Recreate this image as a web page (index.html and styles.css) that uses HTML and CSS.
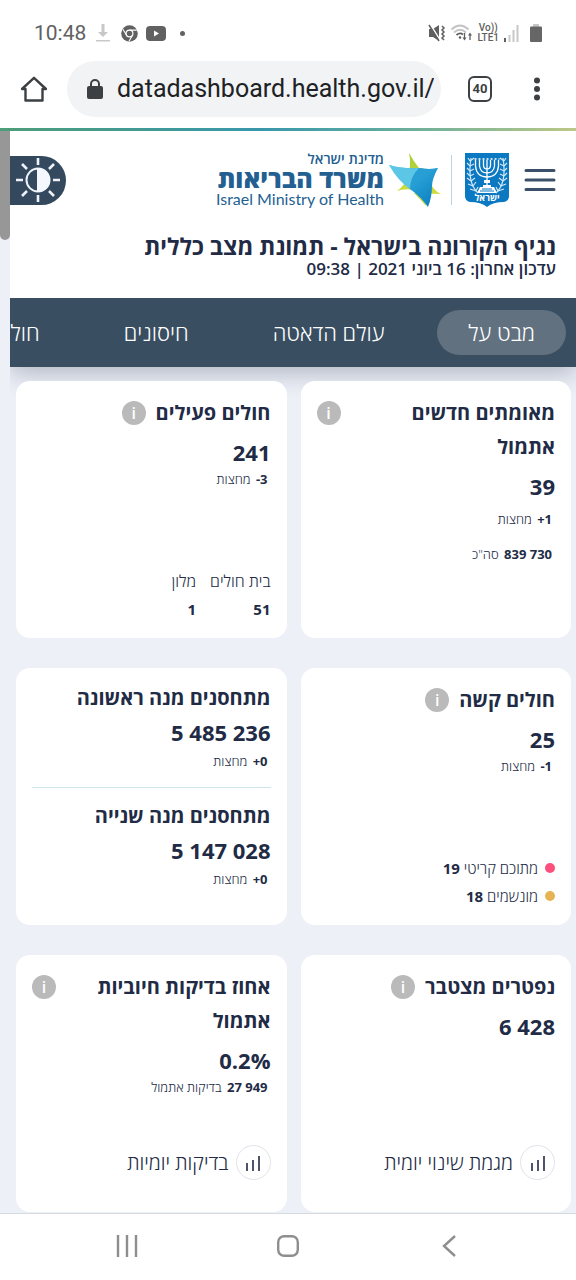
FILE: index.html
```html
<!DOCTYPE html>
<html lang="he">
<head>
<meta charset="utf-8">
<meta name="viewport" content="width=device-width, initial-scale=1">
<title>נגיף הקורונה בישראל - תמונת מצב כללית</title>
<link rel="stylesheet" href="styles.css">
</head>
<body>
<div class="phone">
  <div class="status">
    <div class="status-group">
      <span class="clock">10:48</span>
      <svg class="ico-download" width="14" height="18" viewBox="0 0 14 18" fill="#c8c8c8"><path d="M5.500 0h3v8H12l-5 5-5-5h3.500zM0 16h14v1.500H0z"/></svg>
      <svg class="ico-chrome" width="17" height="17" viewBox="0 0 17 17"><circle cx="8.500" cy="8.500" r="8.300" fill="#616161"/><circle cx="8.500" cy="8.500" r="3.400" fill="#616161" stroke="#fff" stroke-width="1.200"/><path d="M8.500 5.100h7.300M5.600 10.300 1.900 4.200M11.400 10.300 7.900 16.600" stroke="#fff" stroke-width="1.100"/></svg>
      <svg width="20" height="15" viewBox="0 0 20 15"><rect width="20" height="15" rx="4" fill="#616161"/><path d="M8 4.500v6l5-3z" fill="#fff"/></svg>
      <span class="more-dot"></span>
    </div>
    <div class="status-group status-right">
      <svg width="18" height="18" viewBox="0 0 18 18" fill="#5f5f5f"><path d="M1 5h4l6-4v16l-6-4H1z"/><path d="M2 0 12 16" stroke="#fff" stroke-width="1.500"/><path d="M1 1 11 17M14 2l2 2-2 2 2 2-2 2 2 2-2 2 2 2" fill="none" stroke="#5f5f5f" stroke-width="1.500"/></svg>
      <svg width="21" height="18" viewBox="0 0 21 18" fill="none" stroke-width="1.800"><path d="M0.500 5.500Q9 -2.500 17.500 5.500M3 8.500Q9 3 15 8.500" stroke="#c3c3c3"/><path d="M5.500 11Q9 8 12 10.500" stroke="#5f5f5f"/><circle cx="9" cy="13.500" r="1.300" fill="#5f5f5f"/><path d="M13.500 9v6M19 16v-6" stroke="#5f5f5f" stroke-width="1.300"/><path d="M11.500 13.500h4l-2 3zM17 11.500h4l-2-3z" fill="#5f5f5f"/></svg>
      <span class="lte"><span>Vo))</span><span>LTE1</span></span>
      <svg width="15" height="17" viewBox="0 0 15 17"><path d="M0 13h2v4H0z" fill="#5f5f5f"/><path d="M4.500 10h2v7h-2zM8.500 5h2v12h-2zM12.500 0h2v17h-2z" fill="#c8c8c8"/></svg>
      <svg class="battery" width="12" height="18" viewBox="0 0 12 18"><path d="M3 0h6v3H3z" fill="#c8c8c8"/><rect y="2.500" width="12" height="15.500" rx="1" fill="#666"/></svg>
    </div>
  </div>

  <div class="browser">
    <button class="plain" aria-label="Home"><svg width="26" height="26" viewBox="0 0 26 26" fill="none" stroke="#3c4043" stroke-width="2.400" stroke-linejoin="round"><path d="M1 13 13 1.800 25 13h-3.500v11.500h-17V13z"/></svg></button>
    <label class="address">
      <svg width="16" height="20" viewBox="0 0 16 20"><rect y="7" width="16" height="13" rx="2" fill="#3c4043"/><path d="M4 8V5a4 4 0 0 1 8 0v3" fill="none" stroke="#3c4043" stroke-width="2"/></svg>
      <input type="text" value="datadashboard.health.gov.il/" aria-label="Address">
    </label>
    <button class="tab-count" aria-label="Open tabs">40</button>
    <button class="plain" aria-label="Menu"><svg width="8" height="24" viewBox="0 0 8 24" fill="#3c4043"><circle cx="4" cy="3.500" r="3"/><circle cx="4" cy="12" r="3"/><circle cx="4" cy="20.500" r="3"/></svg></button>
  </div>
  <div class="rainbow"></div>

  <div class="site">
    <div class="scrollbar"><div class="thumb"></div></div>
    <div class="page" dir="rtl">
      <header class="header">
        <div class="brand-row">
          <button class="plain" aria-label="תפריט"><svg width="32" height="24" viewBox="0 0 32 24" stroke="#3a5068" stroke-width="3" stroke-linecap="round"><path d="M2 2.500h28M2 12h28M2 21.500h28"/></svg></button>
          <svg class="emblem" width="44" height="54" viewBox="0 0 44 54">
            <path d="M0 0h44v43q0 5-5 6-11 0-17 5-6-5-17-5-5-1-5-6z" fill="#0b78c2"/>
            <g fill="none" stroke="#fff" stroke-width="1.300"><path d="M22 7v25M18.500 7v5q0 4 3.500 4t3.500-4V7M14.500 7v6q1 7 7.500 7t7.500-7V7M10.500 7v6q1 11 11.500 11t11.500-11V7"/><path d="M9.500 6h25" stroke-dasharray="2 2"/></g>
            <path d="M19 27h6v3h-6zM18 32h8v2h-8zM15 34h14l3 6H12z" fill="#fff"/><path d="M17 36h10M15 38h14" stroke="#0b78c2"/>
            <g fill="none" stroke="#cfe6f5" stroke-width="1.200"><path d="M13 40Q2 30 6 5M31 40Q42 30 38 5"/><path d="M5 8 3 5M5 8l4-3M5 13l-3-3M5 13l4-2M5 18l-3-3M5 18l4-2M5 23l-3-3M5 23l4-2M6 28l-4-3M6 28l4-3M8 33l-5-2M8 33l3-4M11 38l-6-2M11 38l2-4M39 8l2-3M39 8l-4-3M39 13l3-3M39 13l-4-2M39 18l3-3M39 18l-4-2M39 23l3-3M39 23l-4-2M38 28l4-3M38 28l-4-3M36 33l5-2M36 33l-3-4M33 38l6-2M33 38l-2-4"/></g>
            <text x="22" y="48" class="emblem-text">ישראל</text>
          </svg>
          <span class="brand-rule"></span>
          <svg class="star" width="52" height="55" viewBox="0 0 52 55">
            <defs>
              <linearGradient id="blue" x1="0" y1="0" x2="1" y2="1"><stop offset="0" stop-color="#42c2e8"/><stop offset="1" stop-color="#0879bf"/></linearGradient>
              <linearGradient id="lime" x1="0" y1="0" x2="0" y2="1"><stop offset="0" stop-color="#a3ce39"/><stop offset="1" stop-color="#d2dd3c"/></linearGradient>
            </defs>
            <path d="M20 0Q25 9 30 15l13 2v16q3 5 9 8-10 0-17-1l-10-3q-9-2-17 1 8-6 10-13 5-12 2-25z" fill="url(#lime)"/>
            <path d="M40 38q-5 7-3 15-5-6-12-13z" fill="#c9da3d"/>
            <path d="M0 12q14 4 30 3 11 2 19 0-6 11-6 18 0 11-4 21-7-10-18-18Q12 28 0 12z" fill="url(#blue)"/>
            <path d="M0 12q14 4 30 3-7 9-9 21Q9 28 0 12z" fill="#5cc6e6"/>
            <path d="m49 15-20 14-8 7q0-12 9-21 11 2 19 0z" fill="#279fd4"/>
          </svg>
          <div class="brand-text">
            <span class="brand-state">מדינת ישראל</span>
            <span class="brand-name">משרד הבריאות</span>
            <span class="brand-en" dir="ltr">Israel Ministry of Health</span>
          </div>
          <button class="contrast" aria-label="מצב תצוגה"><svg width="44" height="44" viewBox="0 0 44 44"><circle cx="22" cy="22" r="11.500" fill="none" stroke="#eef3fb" stroke-width="2"/><path d="M21 10h1a12 12 0 0 1 0 24h-1z" fill="#f4f7fd"/><path d="M22 0v7M22 37v7M0 22h7M37 22h7M6 6l5 5M33 33l5 5M38 6l-5 5M11 33l-5 5" stroke="#eef3fb" stroke-width="2.600"/></svg></button>
        </div>
        <h1 class="title">נגיף הקורונה בישראל - תמונת מצב כללית</h1>
        <p class="updated">עדכון אחרון: 16 ביוני 2021 | 09:38</p>
      </header>

      <nav class="tabs">
        <a href="#" class="tab active">מבט על</a>
        <a href="#" class="tab">עולם הדאטה</a>
        <a href="#" class="tab">חיסונים</a>
        <a href="#" class="tab">חול</a>
      </nav>

      <main class="cards">
        <section class="card">
          <div class="head spread"><h2>מאומתים חדשים אתמול</h2><button class="info" aria-label="מידע">i</button></div>
          <p class="figure">39</p>
          <p class="delta tall"><b dir="ltr">+1</b> מחצות</p>
          <p class="delta tall"><b dir="ltr">839 730</b> סה"כ</p>
        </section>

        <section class="card">
          <div class="head"><h2>חולים פעילים</h2><button class="info" aria-label="מידע">i</button></div>
          <p class="figure">241</p>
          <p class="delta"><b dir="ltr">-3</b> מחצות</p>
          <dl class="places foot">
            <div><dt>בית חולים</dt><dd>51</dd></div>
            <div><dt>מלון</dt><dd>1</dd></div>
          </dl>
        </section>

        <section class="card">
          <div class="head"><h2>חולים קשה</h2><button class="info" aria-label="מידע">i</button></div>
          <p class="figure">25</p>
          <p class="delta"><b dir="ltr">-1</b> מחצות</p>
          <ul class="legend foot">
            <li><span class="dot critical"></span><span>מתוכם קריטי <b>19</b></span></li>
            <li><span class="dot ventilated"></span><span>מונשמים <b>18</b></span></li>
          </ul>
        </section>

        <section class="card doses">
          <div class="dose">
            <h2>מתחסנים מנה ראשונה</h2>
            <p class="figure"><bdi dir="ltr">5 485 236</bdi></p>
            <p class="delta"><b dir="ltr">+0</b> מחצות</p>
          </div>
          <div class="dose">
            <h2>מתחסנים מנה שנייה</h2>
            <p class="figure"><bdi dir="ltr">5 147 028</bdi></p>
            <p class="delta"><b dir="ltr">+0</b> מחצות</p>
          </div>
        </section>

        <section class="card">
          <div class="head"><h2>נפטרים מצטבר</h2><button class="info" aria-label="מידע">i</button></div>
          <p class="figure"><bdi dir="ltr">6 428</bdi></p>
          <a href="#" class="trend foot"><span class="ring"><svg width="16" height="16" viewBox="0 0 16 16" stroke="#222b45" stroke-width="1.600"><path d="M2 8v8M8 5v11M14 1v15"/></svg></span>מגמת שינוי יומית</a>
        </section>

        <section class="card">
          <div class="head spread"><h2>אחוז בדיקות חיוביות אתמול</h2><button class="info" aria-label="מידע">i</button></div>
          <p class="figure"><bdi dir="ltr">0.2%</bdi></p>
          <p class="delta"><b dir="ltr">27 949</b> בדיקות אתמול</p>
          <a href="#" class="trend foot"><span class="ring"><svg width="16" height="16" viewBox="0 0 16 16" stroke="#222b45" stroke-width="1.600"><path d="M2 8v8M8 5v11M14 1v15"/></svg></span>בדיקות יומיות</a>
        </section>
      </main>
    </div>
  </div>

  <div class="system-nav">
    <button class="plain" aria-label="Recents"><svg width="22" height="22" viewBox="0 0 22 22" stroke="#8e8e8e" stroke-width="2.400"><path d="M2 0v22M11 0v22M20 0v22"/></svg></button>
    <button class="plain" aria-label="Home screen"><svg width="22" height="22" viewBox="0 0 22 22" fill="none" stroke="#8e8e8e" stroke-width="2.400"><rect x="1.200" y="1.200" width="19.600" height="19.600" rx="6"/></svg></button>
    <button class="plain" aria-label="Back"><svg width="22" height="22" viewBox="0 0 22 22" fill="none" stroke="#8e8e8e" stroke-width="2.400"><path d="M17 1 6 11l11 10"/></svg></button>
  </div>
</div>
</body>
</html>
```

FILE: styles.css
```css
* { box-sizing: border-box; }

body {
  margin: 0;
  background: #fff;
  color: #222b45;
  font-family: "Open Sans", "Noto Sans", sans-serif;
}

h1, h2, p, dl, dd, ul { margin: 0; padding: 0; }
ul { list-style: none; }
svg { display: block; flex: none; }
button { font-family: inherit; cursor: pointer; }
a { color: inherit; text-decoration: none; }
.plain { background: none; border: 0; padding: 0; }

.phone {
  min-height: 100vh;
  display: flex;
  flex-direction: column;
}

/* Status bar */
.status {
  display: flex;
  justify-content: space-between;
  align-items: flex-end;
  height: 48px;
  padding: 0 34px;
  font-family: Roboto, sans-serif;
  color: #616161;
}
.status-group { display: flex; align-items: center; height: 30px; }
.clock { font-size: 21px; line-height: 30px; margin-right: 10px; }
.ico-download { margin-right: 11px; }
.ico-chrome { margin-right: 8px; }
.more-dot { width: 5px; height: 5px; border-radius: 50%; background: #616161; margin-left: 14px; }
.status-right { gap: 5px; }
.lte { display: flex; flex-direction: column; align-items: center; font-size: 10px; line-height: 10px; font-weight: 500; }
.battery { margin-left: 6px; }

/* Browser bar */
.browser {
  display: flex;
  align-items: center;
  height: 80px;
  padding: 2px 35px 0 21px;
}
.address {
  flex: 1;
  display: flex;
  align-items: center;
  gap: 14px;
  height: 56px;
  margin: 0 27px 0 20px;
  padding: 0 7px 0 20px;
  border-radius: 28px;
  background: #f1f3f4;
}
.address input {
  flex: 1;
  min-width: 0;
  border: 0;
  padding: 0;
  background: none;
  font: 25px/32px Roboto, sans-serif;
  color: #202124;
}
.tab-count {
  width: 26px;
  height: 26px;
  margin-right: 41px;
  padding: 0;
  border: 2px solid #3c4043;
  border-radius: 6px;
  background: none;
  color: #3c4043;
  font: bold 13px/20px Roboto, sans-serif;
}
.rainbow { height: 3px; background: linear-gradient(90deg, #4d9e78, #3897ac 45%, #5aa9a0 65%, #bcc886); }

/* Site */
.site { flex: 1; display: flex; background: #edf0f7; }
.scrollbar { width: 10px; flex: none; }
.thumb { height: 109px; background: #979797; border-radius: 0 0 5px 5px; }
.page { flex: 1; min-width: 0; }

.header { background: #fff; padding: 21px 20px 19px 0; }
.brand-row { display: flex; align-items: center; height: 56px; }
.emblem { margin-right: 15px; }
.emblem-text { font: bold 9px "Open Sans", sans-serif; fill: #fff; text-anchor: middle; }
.brand-rule { width: 1px; height: 50px; margin: 0 13px 0 10px; background: #c2d3e0; }
.brand-text {
  display: flex;
  flex-direction: column;
  margin-right: 5px;
  color: #245f92;
  white-space: nowrap;
}
.brand-state { font-size: 14px; line-height: 14px; font-weight: 600; }
.brand-name { font-size: 25px; line-height: 24px; font-weight: 800; }
.brand-en { font-family: Lato, sans-serif; font-size: 16px; line-height: 18px; text-align: right; }
.contrast {
  display: flex;
  align-items: center;
  width: 56px;
  height: 49px;
  margin-right: auto;
  padding: 0 6px;
  border: 0;
  border-radius: 0 25px 25px 0;
  background: #34485e;
}
.title { margin-top: 25px; font-size: 23px; line-height: 26px; font-weight: 700; white-space: nowrap; }
.updated { font-size: 17px; line-height: 20px; font-weight: 600; }

.tabs {
  position: relative;
  display: flex;
  align-items: center;
  gap: 22px;
  height: 69px;
  padding-right: 10px;
  background: #394e61;
  box-shadow: 0 6px 24px rgba(34, 43, 69, 0.3);
  clip-path: inset(0 0 -40px 0);
}
.tab {
  flex: none;
  padding: 0 31px;
  border-radius: 23px;
  color: #fff;
  font-size: 22px;
  line-height: 45px;
  font-weight: 300;
}
.tab.active { background: #61717f; }

/* Cards */
.cards {
  position: relative;
  display: grid;
  grid-template-columns: 1fr 1fr;
  grid-auto-rows: minmax(257px, auto);
  gap: 30px 14px;
  padding: 14px 5px 1px 6px;
}
.card {
  display: flex;
  flex-direction: column;
  padding: 15px 16px;
  border-radius: 14px;
  background: #fff;
}
.head { display: flex; align-items: flex-start; gap: 10px; }
.head.spread { justify-content: space-between; gap: 32px; }
.card h2 { font-size: 20px; line-height: 34px; font-weight: 700; }
.info {
  flex: none;
  width: 24px;
  height: 24px;
  margin-top: 5px;
  padding: 0;
  border: 0;
  border-radius: 50%;
  background: #bababa;
  color: #fff;
  font-size: 16px;
  line-height: 24px;
  font-weight: 600;
}
.figure { margin: 8px 0 2px; font-size: 22px; line-height: 28px; font-weight: 700; }
.delta { padding-right: 3px; font-size: 13px; line-height: 22px; font-weight: 300; }
.delta b { margin-left: 2px; font-weight: 700; }
.delta.tall { line-height: 35px; }
.foot { margin-top: auto; }

.places { display: flex; gap: 14px; line-height: 28px; }
.places dt { font-size: 16px; font-weight: 300; }
.places dd { font-size: 15px; font-weight: 700; }

.legend { font-size: 15px; line-height: 28px; font-weight: 300; }
.legend li { display: flex; align-items: center; gap: 7px; }
.legend b { font-weight: 700; }
.dot { width: 10px; height: 10px; border-radius: 50%; }
.critical { background: #fd4f7b; }
.ventilated { background: #e6b455; }

.doses .figure { margin-top: 5px; }
.doses .delta { line-height: 26px; }
.card.doses h2 { line-height: 30px; }
.dose + .dose { margin-top: 13px; padding-top: 13px; border-top: 1px solid #cfe6ee; }

.trend { display: flex; align-items: center; gap: 7px; margin-bottom: 17px; font-size: 20px; line-height: 28px; font-weight: 300; }
.ring {
  display: flex;
  align-items: center;
  justify-content: center;
  width: 35px;
  height: 35px;
  border: 1px solid #e2e2ea;
  border-radius: 50%;
}

/* System navigation */
.system-nav {
  display: flex;
  justify-content: center;
  gap: 139px;
  height: 67px;
  padding: 21px 0 24px;
  border-top: 1px solid #d5dadf;
  background: #fff;
}
```
